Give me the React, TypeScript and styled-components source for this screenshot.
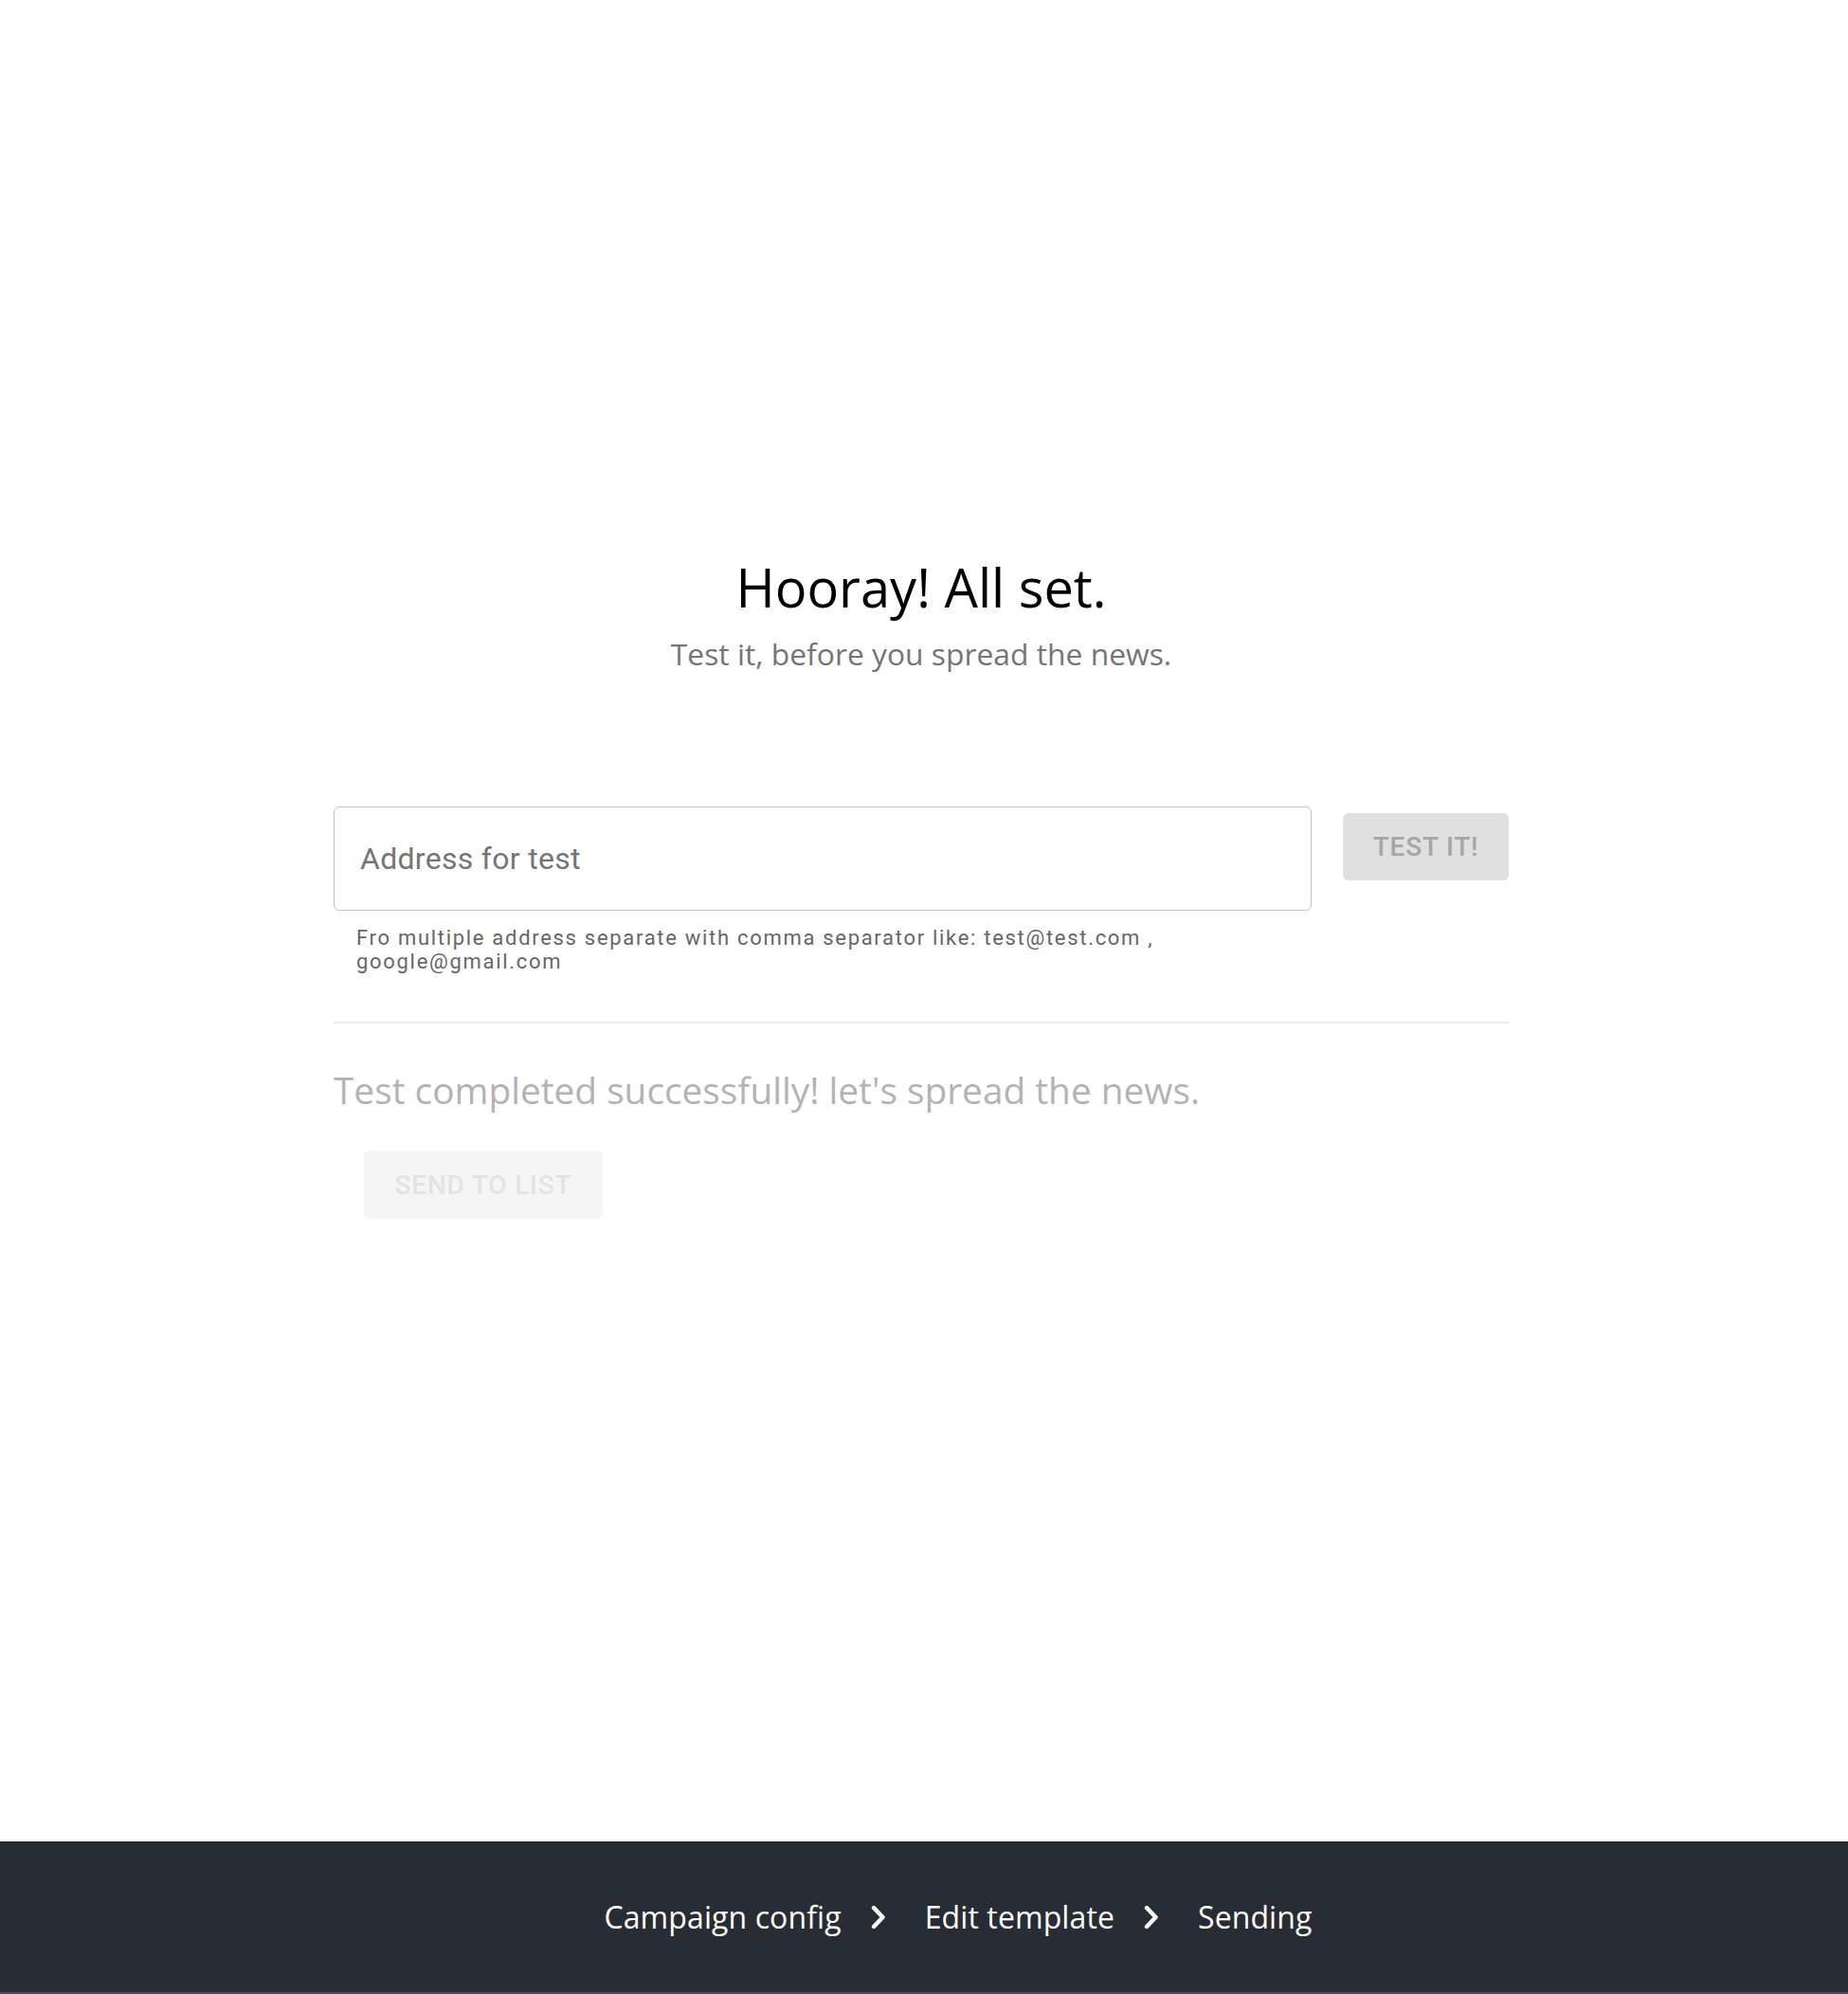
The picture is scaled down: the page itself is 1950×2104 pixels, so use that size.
import styled, { createGlobalStyle } from "styled-components";

const GlobalStyle = createGlobalStyle`
  html, body {
    margin: 0;
    padding: 0;
    background: #ffffff;
  }
  * {
    box-sizing: border-box;
  }
`

const Page = styled.div`
  min-height: 100vh;
  display: flex;
  flex-direction: column;
`

const Main = styled.main`
  flex: 1;
  display: flex;
  justify-content: center;
  padding: 586px 6px 0 0;
`

const Content = styled.div`
  width: 1240px;
`

const Hero = styled.section`
  text-align: center;
  font-family: "Open Sans", "Liberation Sans", sans-serif;
`

const Title = styled.h1`
  margin: 0;
  font-size: 56px;
  line-height: 67px;
  font-weight: 400;
  color: #000;
`

const Subtitle = styled.p`
  margin: 18px 0 0;
  font-size: 31.8px;
  line-height: 38px;
  color: #757575;
`

const TestRow = styled.div`
  display: flex;
  align-items: flex-start;
  gap: 33px;
  margin-top: 142px;
`

const Field = styled.div`
  flex: 1;
`

const AddressInput = styled.input`
  display: block;
  width: 100%;
  height: 110px;
  padding: 0 27px;
  border: 1.5px solid #c4c4c4;
  border-radius: 6px;
  font-family: Roboto, "Liberation Sans", sans-serif;
  font-size: 32px;
  letter-spacing: 0.3px;
  color: #222;
  outline: none;
  &::placeholder {
    color: #757575;
    opacity: 1;
  }
`

const Helper = styled.p`
  margin: 16px 24px 0;
  font-family: Roboto, "Liberation Sans", sans-serif;
  font-size: 22px;
  line-height: 25px;
  letter-spacing: 1.7px;
  color: #666;
`

const ActionButton = styled.button<{ $faded?: boolean }>`
  display: inline-flex;
  align-items: center;
  justify-content: center;
  border: none;
  border-radius: 6px;
  font-family: Roboto, "Liberation Sans", sans-serif;
  font-size: 28px;
  font-weight: 500;
  letter-spacing: 0.8px;
  text-transform: uppercase;
  background: ${p => (p.$faded ? "#f5f5f5" : "#e0e0e0")};
  color: ${p => (p.$faded ? "#e3e3e3" : "#a6a6a6")};
  cursor: default;
`

const TestButton = styled(ActionButton)`
  width: 175px;
  height: 71px;
  margin-top: 7px;
`

const SendButton = styled(ActionButton)`
  width: 252px;
  height: 72px;
  margin: 40px 0 0 32px;
`

const Divider = styled.hr`
  margin: 51px 0 0;
  border: none;
  height: 2px;
  background: #ececec;
`

const Status = styled.h2`
  margin: 47px 0 0;
  font-family: "Open Sans", "Liberation Sans", sans-serif;
  font-size: 38.8px;
  line-height: 47px;
  font-weight: 400;
  color: #b3b3b3;
`

const Footer = styled.footer`
  height: 161px;
  display: flex;
  align-items: center;
  justify-content: center;
  padding-left: 72px;
  background: #282c34;
  border-bottom: 2px solid #4a4d53;
`

const Steps = styled.ol`
  display: flex;
  align-items: center;
  margin: 0;
  padding: 0;
  list-style: none;
  font-family: "Open Sans", "Liberation Sans", sans-serif;
  font-size: 32px;
  letter-spacing: 0.1px;
  color: #fff;
`

const Step = styled.li`
  line-height: 40px;
`

const Chevron = styled.svg`
  display: block;
  width: 18px;
  height: 26px;
  margin: 0 40px 0 30px;
`

const steps = ["Campaign config", "Edit template", "Sending"];

function App() {
    return (
        <Page>
            <GlobalStyle />
            <Main>
                <Content>
                    <Hero>
                        <Title>Hooray! All set.</Title>
                        <Subtitle>Test it, before you spread the news.</Subtitle>
                    </Hero>
                    <TestRow>
                        <Field>
                            <AddressInput placeholder="Address for test" />
                            <Helper>
                                Fro multiple address separate with comma separator like: test@test.com , google@gmail.com
                            </Helper>
                        </Field>
                        <TestButton disabled>Test it!</TestButton>
                    </TestRow>
                    <Divider />
                    <Status>Test completed successfully! let's spread the news.</Status>
                    <SendButton $faded disabled>Send to list</SendButton>
                </Content>
            </Main>
            <Footer>
                <Steps>
                    {steps.map((label, i) => (
                        <>
                            <Step key={label}>{label}</Step>
                            {i < steps.length - 1 && (
                                <Chevron key={label + "-sep"} viewBox="0 0 18 26" aria-hidden>
                                    <path d="M4 3 L13.5 13 L4 23" fill="none" stroke="#fff" strokeWidth="4.4" strokeLinecap="round" strokeLinejoin="round" />
                                </Chevron>
                            )}
                        </>
                    ))}
                </Steps>
            </Footer>
        </Page>
    )
}

export default App;
